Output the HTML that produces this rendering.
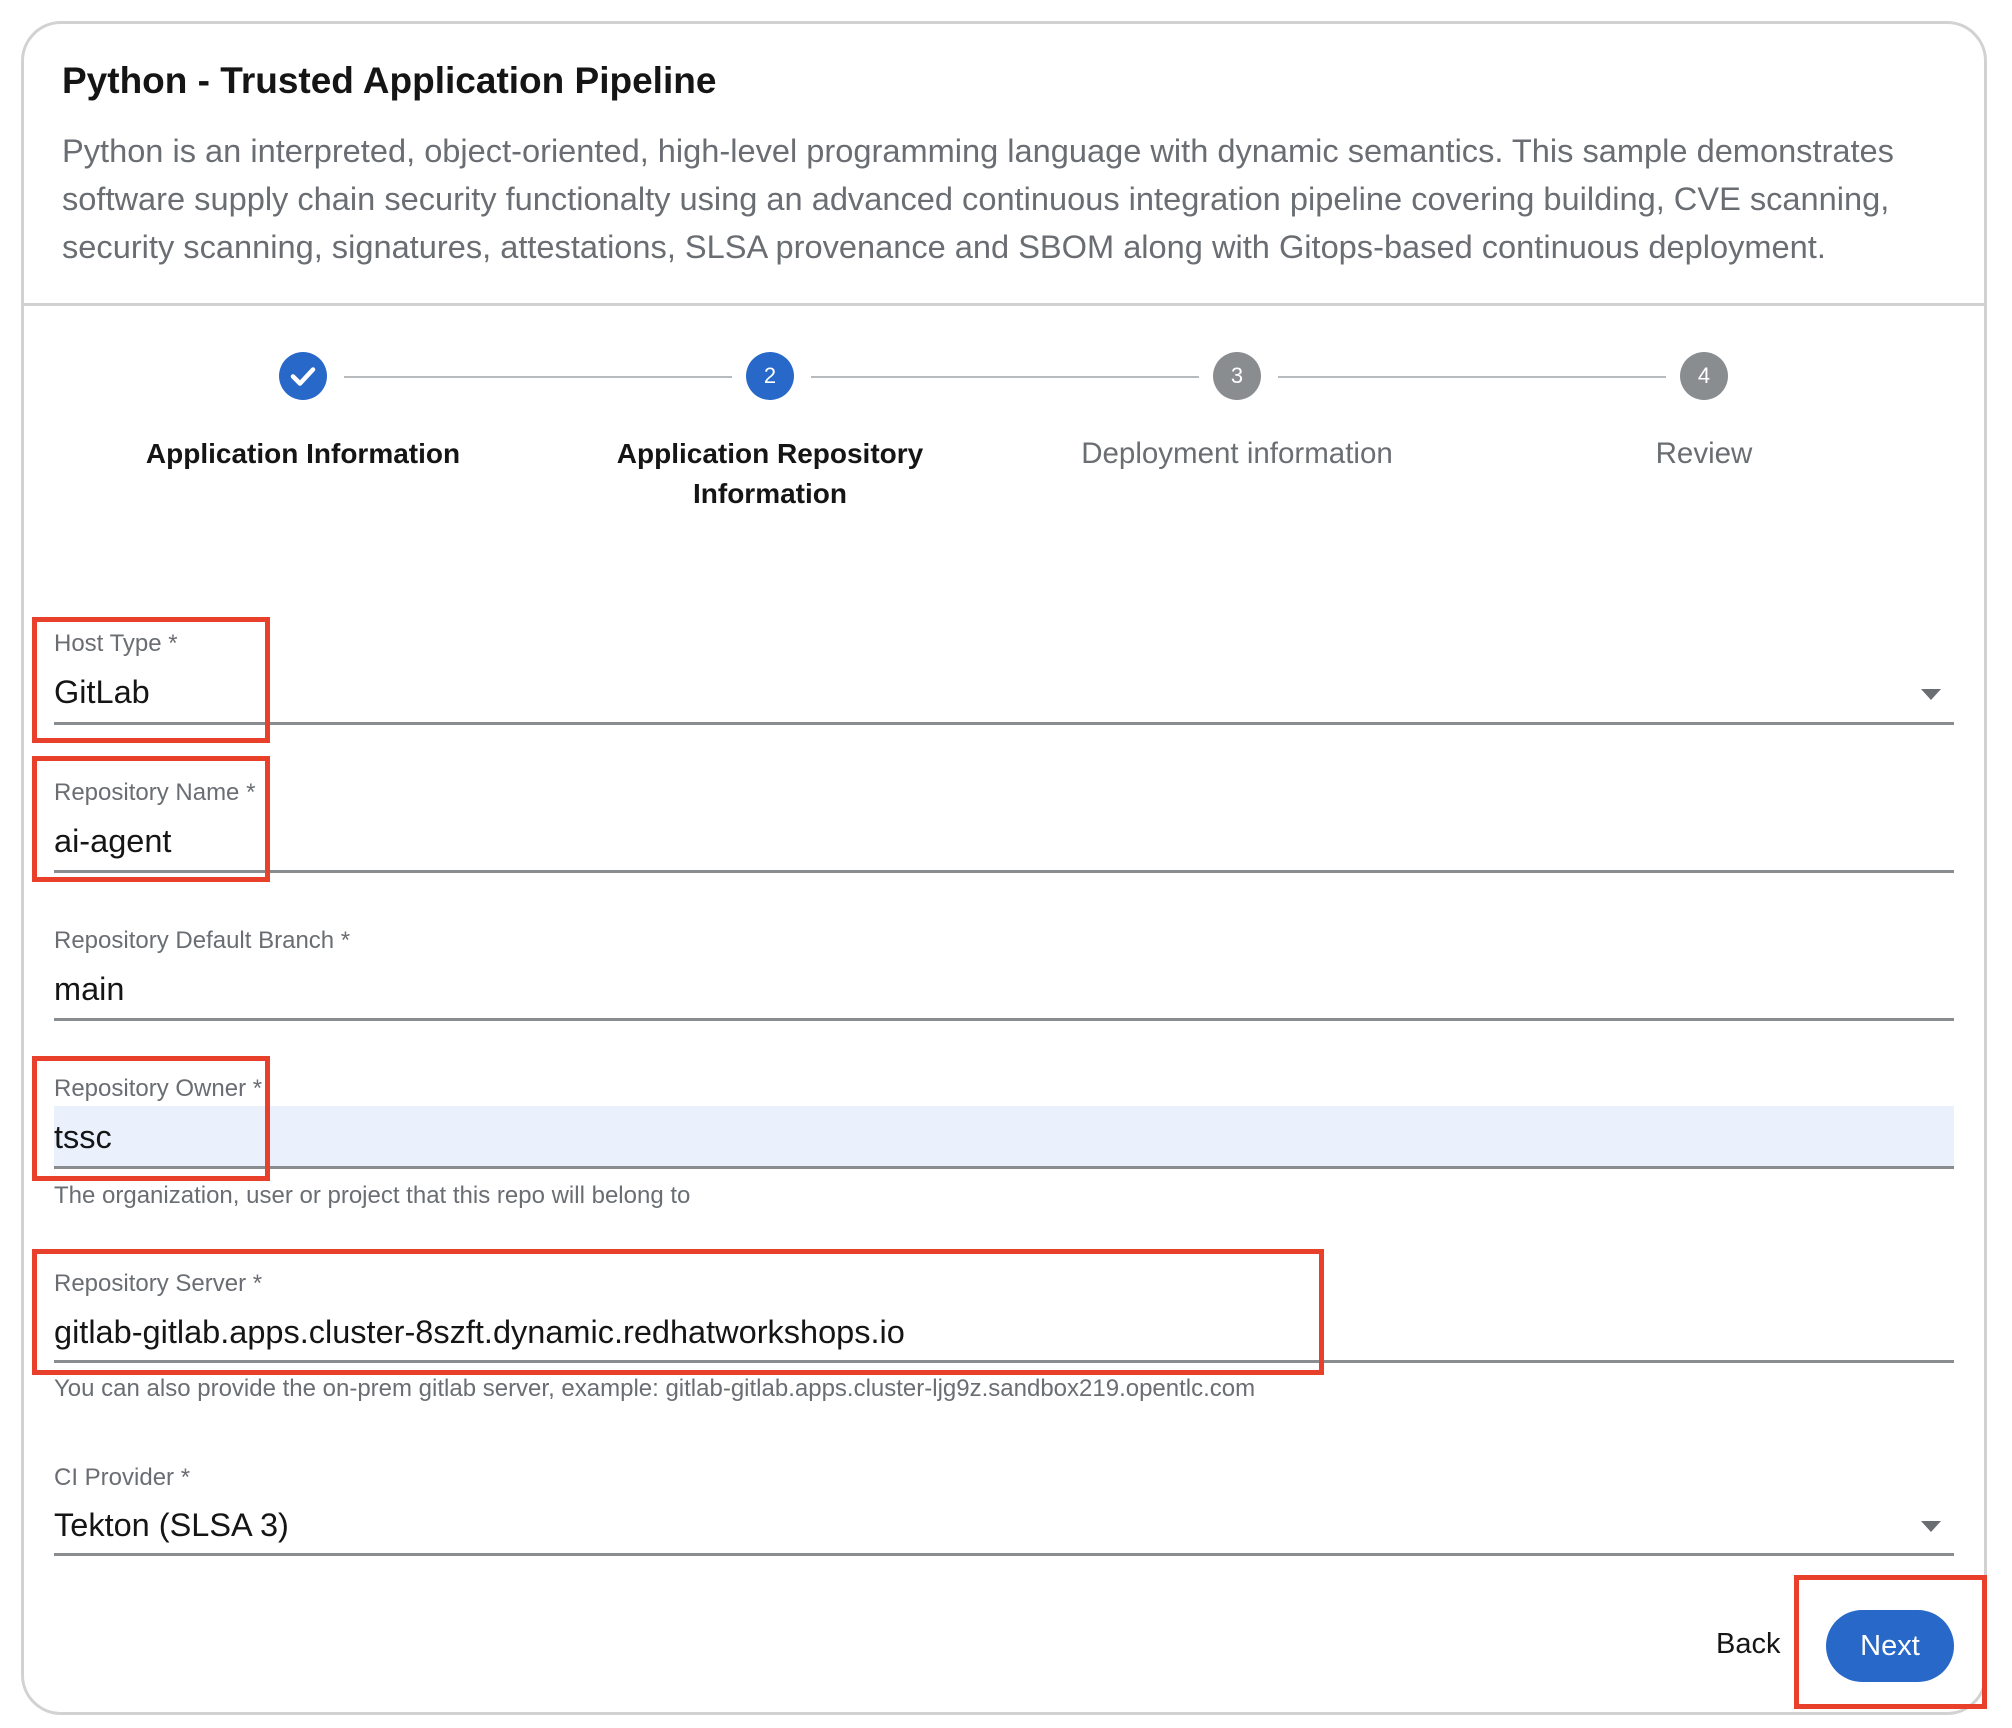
<!DOCTYPE html>
<html><head><meta charset="utf-8"><style>
*{margin:0;padding:0;box-sizing:border-box}
body{width:2012px;height:1728px;background:#fff;font-family:"Liberation Sans",sans-serif;position:relative;overflow:hidden}
.card{position:absolute;left:21px;top:21px;width:1966px;height:1694px;border:3px solid #d2d2d2;border-radius:40px}
.a{position:absolute;white-space:nowrap}
.title{left:62px;top:60px;font-size:37px;font-weight:bold;color:#151515}
.desc{left:62px;top:127px;font-size:32.6px;line-height:48px;color:#6a6e73;white-space:normal;width:1910px}
.sep{position:absolute;left:22px;top:303px;width:1964px;height:3px;background:#d2d2d2}
.circ{position:absolute;width:48px;height:48px;border-radius:50%;color:#fff;font-size:22px;text-align:center;line-height:48px;top:352px}
.blue{background:#2868c8}.grey{background:#8a8d90}
.conn{position:absolute;top:376px;height:2px;background:#b8bbbe}
.step{position:absolute;top:434px;font-size:28px;line-height:40px;text-align:center;width:460px}
.lbl{position:absolute;left:54px;font-size:24px;color:#6a6e73}
.val{position:absolute;left:54px;font-size:32.5px;color:#151515}
.line{position:absolute;left:54px;width:1900px;height:3px;background:#8a8d90}
.help{position:absolute;left:54px;font-size:24px;color:#6a6e73}
.red{position:absolute;border:5px solid #e8402a}
.arrow{position:absolute;left:1921px;width:0;height:0;border-left:10px solid transparent;border-right:10px solid transparent;border-top:11px solid #6a6e73}
</style></head><body>
<div class="card"></div>
<div class="a title">Python - Trusted Application Pipeline</div>
<div class="a desc">Python is an interpreted, object-oriented, high-level programming language with dynamic semantics. This sample demonstrates software supply chain security functionalty using an advanced continuous integration pipeline covering building, CVE scanning, security scanning, signatures, attestations, SLSA provenance and SBOM along with Gitops-based continuous deployment.</div>
<div class="sep"></div>

<div class="conn" style="left:344px;width:388px"></div>
<div class="conn" style="left:811px;width:388px"></div>
<div class="conn" style="left:1278px;width:388px"></div>
<div class="circ blue" style="left:279px"><svg width="48" height="48" viewBox="0 0 48 48"><path d="M14 24.5l7 7 13-14" stroke="#fff" stroke-width="4.5" fill="none" stroke-linecap="round" stroke-linejoin="round"/></svg></div>
<div class="circ blue" style="left:746px">2</div>
<div class="circ grey" style="left:1213px">3</div>
<div class="circ grey" style="left:1680px">4</div>
<div class="step" style="left:73px;color:#151515;font-weight:bold">Application Information</div>
<div class="step" style="left:540px;color:#151515;font-weight:bold">Application Repository<br>Information</div>
<div class="step" style="left:1007px;color:#6a6e73;font-size:29.5px">Deployment information</div>
<div class="step" style="left:1474px;color:#6a6e73;font-size:29.5px">Review</div>

<div class="lbl" style="top:630px">Host Type *</div>
<div class="val" style="top:674px">GitLab</div>
<div class="arrow" style="top:689px"></div>
<div class="line" style="top:722px"></div>

<div class="lbl" style="top:779px">Repository Name *</div>
<div class="val" style="top:823px">ai-agent</div>
<div class="line" style="top:870px"></div>

<div class="lbl" style="top:927px">Repository Default Branch *</div>
<div class="val" style="top:971px">main</div>
<div class="line" style="top:1018px"></div>

<div style="position:absolute;left:54px;top:1106px;width:1900px;height:62px;background:#eaf0fc"></div>
<div class="lbl" style="top:1075px">Repository Owner *</div>
<div class="val" style="top:1119px">tssc</div>
<div class="line" style="top:1166px"></div>
<div class="help" style="top:1182px">The organization, user or project that this repo will belong to</div>

<div class="lbl" style="top:1270px">Repository Server *</div>
<div class="val" style="top:1314px">gitlab-gitlab.apps.cluster-8szft.dynamic.redhatworkshops.io</div>
<div class="line" style="top:1360px"></div>
<div class="help" style="top:1375px">You can also provide the on-prem gitlab server, example: gitlab-gitlab.apps.cluster-ljg9z.sandbox219.opentlc.com</div>

<div class="lbl" style="top:1464px">CI Provider *</div>
<div class="val" style="top:1507px">Tekton (SLSA 3)</div>
<div class="arrow" style="top:1521px"></div>
<div class="line" style="top:1553px"></div>

<div class="a" style="left:1716px;top:1628px;font-size:29px;color:#151515">Back</div>
<div style="position:absolute;left:1826px;top:1610px;width:128px;height:72px;border-radius:36px;background:#2868c8;color:#fff;font-size:29px;text-align:center;line-height:72px">Next</div>

<div class="red" style="left:32px;top:617px;width:238px;height:126px"></div>
<div class="red" style="left:32px;top:756px;width:238px;height:126px"></div>
<div class="red" style="left:32px;top:1056px;width:238px;height:125px"></div>
<div class="red" style="left:32px;top:1249px;width:1292px;height:126px"></div>
<div class="red" style="left:1794px;top:1575px;width:193px;height:134px"></div>
</body></html>
